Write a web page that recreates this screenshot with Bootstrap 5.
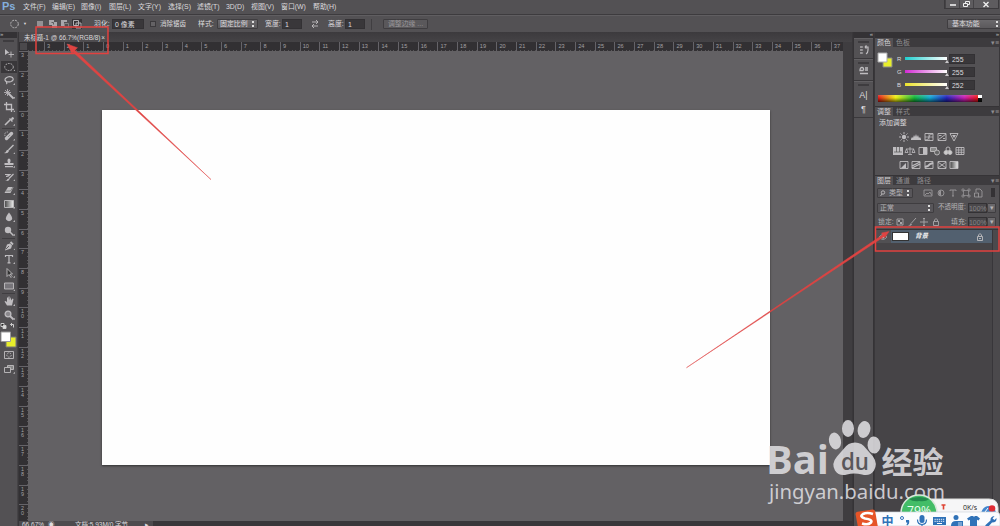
<!DOCTYPE html>
<html lang="zh-CN">
<head>
<meta charset="utf-8">
<title>Photoshop</title>
<link href="https://cdn.jsdelivr.net/npm/bootstrap@5.3.0/dist/css/bootstrap.min.css" rel="stylesheet">
<style>
body{width:1000px;height:526px;overflow:hidden;background:#535154;color:#dcdadd;font:6.9px/1 "Liberation Sans","Noto Sans CJK SC",sans-serif;white-space:nowrap}
svg{display:block;overflow:visible}
.ic{fill:none;stroke:#bfbdc0;stroke-width:.9;width:10px;height:10px}
.ic .f{fill:#bfbdc0;stroke:none}
.menubar{height:15px;border-bottom:1px solid #3d3b3e}
.logo{width:23px;font:bold 11px/13px "Liberation Sans",sans-serif;color:#84aedc;padding-left:2px}
.menus{display:grid;grid-template-columns:29px 29px 28px 29px 30px 29px 29px 25px 30px 32px 28px;line-height:13px}
.winbtns{margin-right:1px;height:9px;background:#5e5c5f;border:1px solid #3c3a3d;border-top:0}
.winbtns>div{display:flex;align-items:center;justify-content:center;border-left:1px solid #454346}
.opts{height:17px;display:grid;align-items:center;border-top:1px solid #605e61;grid-template-columns:10px 12px 13px 12.5px 12.5px 12px 12px 10px 18px 38px 10px 38px 19px 48px 17px 27px 19px 17px 26px 12px 45px 519px 55px}
.inp{background:#39373a;border:1px solid #333134;height:10px;line-height:9px;padding-left:2px}
.sel{background:linear-gradient(#6b696c,#5b595c);border:1px solid #3f3d40;height:10px;line-height:8px;padding:0 2px;display:flex;justify-content:space-between;border-radius:1px}
.ud{width:4px;height:7px;background:linear-gradient(#ddd,#ddd) center 1px/2px 2px no-repeat,linear-gradient(#ddd,#ddd) center 5px/2px 2px no-repeat}
.workspace{height:494px;background:#39373a}
.tools{width:18px;background:#535154;border-right:1px solid #454346}
.striphead{height:6px;background:#343235;font-size:6px;line-height:5px;color:#bbb}
.grip{height:2px;width:11px;background:#3e3c3f;margin:2px auto}
.tool{height:13.6px;display:flex;align-items:center;justify-content:center;position:relative}
.tool.more:after{content:"";width:2px;height:2px;position:absolute;right:2px;bottom:2px;background:#b5b3b6;clip-path:polygon(100% 0,100% 100%,0 100%)}
.tool.act>svg{background:#39373a;outline:1px solid #39373a;width:14px}
.sepr{height:1.2px;background:#403e41;margin:0 2px}
.doc{width:833px;margin-left:1px;background:#3f3d40}
.tabs{height:10px;background:linear-gradient(#3c3a3d,#454346)}
.dtab{width:90px;background:#4e4c4f;padding:0 3px 0 5px;line-height:11px;font-size:6.4px;border-right:1px solid #333}
.rulh{height:9.5px;background:#323033;overflow:hidden;width:824px}
.corner{width:9px;background:#4b494c;border:1px solid #323033}
.rt{margin-left:-3.7px}
.rt span{flex:0 0 19.68px;border-left:1px solid #656368;padding-left:2px;font-size:5.6px;line-height:8px;color:#a3a1a4;background:repeating-linear-gradient(90deg,transparent 0 2.9px,#59575a 2.9px 3.9px) bottom/100% 1.5px no-repeat}
.rulv{width:9px;background:#323033;overflow:hidden}
.rulv span{height:19.7px;flex:0 0 19.7px;border-top:1px solid #656368;padding:1px 0 0 2px;font-size:5.4px;line-height:5px;color:#a3a1a4;white-space:pre;background:repeating-linear-gradient(transparent 0 2.9px,#59575a 2.9px 3.9px) right/1.5px 100% no-repeat}
.stage{background:#636164;width:815px;padding:58.5px 0 0 74px}
.paper{width:668px;height:355px;background:#fefefe;box-shadow:0 1px 2px #333}
.status{height:5px;overflow:hidden;background:#39373a;font-size:6.5px;line-height:7px}
.status>div{width:134px;background:#4d4b4e}
.dock{width:21px;margin-left:1px;background:#535154;border:solid #353336;border-width:0 1px}
.dockgrp{border-bottom:1px solid #3a383b;border-top:1px solid #626063}
.panels{width:124px;margin-left:1px}
.ptabs{height:9px;background:#3d3b3e;line-height:9px;color:#8f8d90}
.ptabs b{font-weight:400;color:#d2d0d3;background:#535154;padding:0 2px;width:18px}
.ptabs span{width:21px;padding-left:3px}
.pbody{background:#535154;border-bottom:1px solid #363437}
.chan{height:13px;display:grid;grid-template-columns:8px 44px 26px;align-items:center}
.chan .inp{height:10px}
.bar{height:3px;position:relative;width:42px}
.bar:after{content:"";position:absolute;right:-2px;top:3px;border:solid transparent;border-width:0 2.5px 3.5px;border-bottom-color:#c8c6c9}
.spectrum{height:7px;width:104px;margin-left:3px;background:linear-gradient(#fff,#fff) right top/4px 3px no-repeat,linear-gradient(rgba(255,255,255,.2),transparent 40%,rgba(0,0,0,.6)),linear-gradient(90deg,#e01515,#eded10 17%,#12b438 35%,#11a6d0 50%,#2222b8 66%,#c71db0 83%,#e81515 96%,#111 96%)}
.adj{display:flex;justify-content:center;gap:2.6px;height:14px;align-items:center}
.dim{color:#858386}
.overlay{position:absolute;left:0;top:0;pointer-events:none}
</style>
</head>
<body>
<div class="menubar d-flex">
 <div class="logo">Ps</div>
 <div class="menus"><span>文件(F)</span><span>编辑(E)</span><span>图像(I)</span><span>图层(L)</span><span>文字(Y)</span><span>选择(S)</span><span>滤镜(T)</span><span>3D(D)</span><span>视图(V)</span><span>窗口(W)</span><span>帮助(H)</span></div>
 <div class="winbtns d-flex ms-auto">
  <div style="width:14px"><svg width="6" height="6"><path d="M0 4h6" stroke="#eee" stroke-width="1.6"/></svg></div>
  <div style="width:14px"><svg width="7" height="6" fill="none" stroke="#eee"><path d="M2.5 2V.5h4v3H5M.5 2.5h4v3h-4z"/></svg></div>
  <div style="width:25px"><svg width="6" height="5"><path d="M.5 0l5 5m0-5l-5 5" stroke="#eee" stroke-width="1.4"/></svg></div>
 </div>
</div>
<div class="opts">
 <span></span>
 <svg class="ic"><circle cx="4.5" cy="5" r="3.8" stroke-dasharray="2 1"/></svg>
 <span style="font-size:4px;padding-left:1px">▼</span>
 <svg class="ic"><path class="f" d="M2 2h6v6H2z" opacity=".6"/></svg>
 <svg class="ic"><path class="f" d="M1 1h5v2h3v6H4V6H1z" opacity=".8"/><path d="M3.5 3.5h2v2" stroke="#555"/></svg>
 <svg class="ic"><path class="f" d="M1 1h6v2H4v4H1z" opacity=".8"/><path d="M4.500 4.500h4v4h-4z" stroke="#888"/></svg>
 <svg class="ic" style="background:#363437"><path d="M1.500 1.500h5v5h-5zM4 4h5v5H4z"/></svg>
 <span></span>
 <span>羽化:</span><span class="inp" style="width:32px">0 像素</span>
 <span style="width:6px;height:6px;background:#646265;border:1px solid #3b393c"></span>
 <span style="font-size:6.500px">消除锯齿</span><span>样式:</span>
 <span class="sel" style="width:41px"><span>固定比例</span><span class="ud"></span></span>
 <span>宽度:</span><span class="inp" style="width:20px">1</span>
 <svg class="ic" style="margin-left:1px"><path d="M2 3h6m-2-2 2 2-2 2M8 7H2m2-2L2 7l2 2"/></svg>
 <span>高度:</span><span class="inp" style="width:20px">1</span><span style="width:1px;height:11px;background:#403e41"></span>
 <span class="sel justify-content-center" style="color:#9a989b;background:#5a585b">调整边缘 ...</span>
 <span></span><span class="sel" style="width:55px;padding-left:4px"><span>基本功能</span><span class="ud"></span></span>
</div>
<div class="workspace d-flex">
 <div class="tools">
  <div class="striphead">»</div><div class="grip"></div><div style="height:2.2px"></div>
  <div id="tools"></div>
  <svg width="18" height="9" fill="none" stroke="#ccc"><path d="M1 1.500h3v3H1z" fill="#222"/><path d="M3 3.500h3v3H3z" fill="#ddd"/><path d="M10.500 2.500h3v3M10.500 2.500l1.500-1.500m0 3l-1.500-1.500"/></svg>
  <svg width="18" height="18"><path d="M6 6h10v10H6z" fill="#e8ee2a" stroke="#777"/><path d="M1 1h9.500v9.500H1z" fill="#fff" stroke="#999"/></svg>
  <div class="tool"><svg class="ic"><path d="M.5 1.500h9v7h-9z"/><circle cx="5" cy="5" r="2.200" stroke-dasharray="1.500 1"/></svg></div>
  <div class="tool more"><svg class="ic"><path d="M3.500 1.500h6v4h-6z" fill="#888"/><path d="M.5 3.500h6v5h-6z" fill="#535154"/></svg></div>
 </div>
 <div class="doc d-flex flex-column">
  <div class="tabs d-flex"><div class="dtab d-flex justify-content-between"><span>未标题-1 @ 66.7%(RGB/8)</span><span>×</span></div></div>
  <div class="rulh d-flex"><div class="corner flex-shrink-0"></div><div class="overflow-hidden flex-grow-1"><div class="rt d-flex h-100" id="rh"></div></div></div>
  <div class="d-flex flex-grow-1" style="min-height:0">
   <div class="rulv d-flex flex-column" id="rv"></div>
   <div class="stage"><div class="paper"></div></div>
  </div>
  <div class="status"><div class="d-flex"><span style="width:25px;padding-left:3px">66.67%</span><span style="width:31px;padding-left:4px">◉</span><span style="width:70px">文档:5.93M/0 字节</span><span>▸</span></div></div>
 </div>
 <div class="dock">
  <div class="striphead text-end">«</div>
  <div class="dockgrp" style="height:21px"><div class="grip"></div><svg class="ic mx-auto"><path d="M2 1v2M2 4v2M2 7v2M3.500 1.500v1M3.500 4.500v1M3.500 7.500v1M6 2h3v3q0 3-2 4M6 2l1.500-1.500M6 2l1.500 1.500" stroke-width="1.200"/></svg></div>
  <div class="dockgrp" style="height:22px"><div class="grip"></div><svg class="ic mx-auto"><path d="M4.500 4.500H1q0-3 2-3t1.500 3M6 2h3M6 4h3M1 7.500h8" stroke-width="1.300"/></svg></div>
  <div class="dockgrp" style="height:37px"><div class="grip"></div><div class="text-center" style="font-size:9px;line-height:14px">A|<br>¶</div></div>
 </div>
 <div class="panels">
  <div class="striphead text-end">»</div>
  <div class="ptabs d-flex"><b>颜色</b><span>色板</span><span class="ms-auto text-end w-auto">▾≡</span></div>
  <div class="pbody" style="height:60px;padding-top:5px">
   <div class="d-flex" style="height:43px">
    <svg width="22" height="20"><path d="M8 6h9v9H8z" fill="#e8ee2a" stroke="#888"/><path d="M3 1h9v9H3z" fill="#fff" stroke="#aaa"/></svg>
    <div>
     <div class="chan"><span style="font-size:6px">R</span><div class="bar" style="background:linear-gradient(90deg,#20cfcf,#fff)"></div><span class="inp">255</span></div>
     <div class="chan"><span style="font-size:6px">G</span><div class="bar" style="background:linear-gradient(90deg,#d32bd3,#fff)"></div><span class="inp">255</span></div>
     <div class="chan"><span style="font-size:6px">B</span><div class="bar" style="background:linear-gradient(90deg,#ece22c,#fff)"></div><span class="inp">252</span></div>
    </div>
   </div>
   <div class="spectrum"></div>
  </div>
  <div class="ptabs d-flex"><b>调整</b><span>样式</span><span class="ms-auto text-end w-auto">▾≡</span></div>
  <div class="pbody" style="height:60px;padding-top:4px">
   <div style="padding-left:4px;height:10px">添加调整</div>
   <div style="padding-right:16px">
   <div class="adj" id="a1"></div><div class="adj" id="a2"></div><div class="adj" id="a3"></div></div>
  </div>
  <div class="ptabs d-flex"><b>图层</b><span>通道</span><span>路径</span><span class="ms-auto text-end w-auto">▾≡</span></div>
  <div class="pbody" style="height:45px;color:#b5b3b6">
   <div class="d-flex align-items-center" style="height:15px;padding-left:2px"><span class="sel" style="width:36px;background:#58565a"><svg class="ic" style="width:6px;height:8px"><circle cx="3" cy="3.500" r="1.700"/><path d="M2 5L.5 7"/></svg><span>类型</span><span class="ud"></span></span>
    <div class="d-flex" style="margin-left:10px;gap:2.500px;opacity:.65" id="filters"></div><span style="margin-left:8px;width:4px;height:9px;background:#343235"></span></div>
   <div class="d-flex align-items-center" style="height:15px;padding-left:2px"><span class="sel" style="width:57px;background:#58565a"><span>正常</span><span class="ud"></span></span><span style="margin-left:4px;width:30px;font-size:6.500px">不透明度:</span><span class="inp dim" style="width:19px;padding:0;background:#4a484b">100%</span><span class="sel" style="width:9px">▾</span></div>
   <div class="d-flex align-items-center" style="height:14px;padding-left:3px"><span style="width:17px">锁定:</span><div class="d-flex" style="gap:2px;opacity:.8" id="locks"></div><span style="margin-left:10px;width:17px">填充:</span><span class="inp dim" style="width:19px;padding:0;background:#4a484b">100%</span><span class="sel" style="width:9px">▾</span></div>
  </div>
  <div class="d-flex" style="height:297px;background:#464447;width:125px">
   <div style="width:117px"><div class="d-flex align-items-center" style="height:13px;background:#515053">
    <svg class="ic" style="width:16px"><path d="M4 5q4-5 8 0q-4 5-8 0z" stroke="#999"/><circle class="f" cx="8" cy="5" r="1.500"/></svg>
    <div class="d-flex align-items-center flex-grow-1 h-100" style="background:#52606f;color:#f2f2f2"><span style="width:17px;height:9px;background:#fff;border:1px solid #333;margin-left:1px"></span><b class="fst-italic" style="margin-left:6px;font-size:6.500px">背景</b><svg class="ic ms-auto" style="margin-right:7px"><path d="M2.500 4.500h5v4h-5zM3.500 4V3q1.500-3 3 0v1M4 6.500h2"/></svg></div></div></div>
   <div style="width:8px;background:#4b494c;border-left:1px solid #38363a"></div>
  </div>
 </div>
</div>

<svg class="overlay" width="1000" height="526">
 <g fill="none" stroke="#e2413f" stroke-width="1.500"><rect x="36" y="27" width="72" height="26.500"/><rect x="875.500" y="227" width="123.500" height="24"/></g>
 <g fill="#df4442" stroke="#df4442" stroke-width=".45"><path d="M211 179.600 71 50.300 73 48.400z"/><path d="M67 44l10.500 3.700-5.700 5.500z"/><path d="M686.500 367.700 883.800 234 885 236z"/><path d="M889 231.500l-4.200 6.200-3.300-4.700z"/></g>
 <g fill="#dedde0" fill-opacity=".88">
  <text x="766" y="474" font-family="Open Sans,sans-serif" font-weight="700" font-size="39" textLength="63" lengthAdjust="spacingAndGlyphs">Bai</text>
  <ellipse cx="835" cy="441" rx="6" ry="8.500" transform="rotate(-12 835 441)"/><ellipse cx="848" cy="428.500" rx="6" ry="8.500"/><ellipse cx="864" cy="429.500" rx="6.300" ry="8.500" transform="rotate(14 864 429.500)"/><ellipse cx="874" cy="445" rx="6.500" ry="8.500" transform="rotate(-5 874 445)"/>
  <path d="M855 442.500q7 0 11 6l7 8q5 7 1 14-4 6-12 4-8-2-15 0-8 2-12-4-4-7 2-14l7-8q4-6 11-6z"/>
  <text x="881.500" y="473" font-family="Noto Sans CJK SC,sans-serif" font-weight="700" font-size="30" textLength="62" lengthAdjust="spacingAndGlyphs">经验</text>
  <text x="769" y="499" font-family="Noto Sans,sans-serif" font-size="19.500" textLength="176" lengthAdjust="spacingAndGlyphs">jingyan.baidu.com</text>
 </g>
 <text x="841" y="470" font-family="Open Sans,sans-serif" font-weight="600" font-size="24" fill="#59575a" textLength="28" lengthAdjust="spacingAndGlyphs">du</text>
 <path d="M925 499h64q9 0 9 9v10h-73z" fill="#f6f6f7" stroke="#ddd"/>
 <circle cx="919" cy="513" r="18" fill="#43bd67" stroke="#d9e8dc" stroke-width="1.500"/>
 <path d="M909 499q10-4 20 0-3 3-10 2-6 1-10-2z" fill="#248a4d"/>
 <text x="907" y="514.500" font-family="Open Sans,sans-serif" font-size="12" fill="#e9fff0" textLength="24" lengthAdjust="spacingAndGlyphs">79%</text>
 <path d="M943.500 509.500v-4m-2-.5h4" stroke="#df4434" stroke-width="1.600"/>
 <text x="963" y="509.500" font-family="Open Sans,sans-serif" font-size="7" fill="#222" textLength="14">0K/s</text>
 <path d="M981 513q2-7 8-7t7 7z" fill="#4387cf"/><path d="M985 512l3-4" stroke="#fff"/><circle cx="992" cy="508.500" r="3.300" fill="#e02b34"/>
 <path d="M870 512h126q4 0 4 4v10H870z" fill="#fbfcfe" stroke="#d0d5dc" stroke-width=".7"/>
 <path d="M855.500 514q0-2 2-2.300l15-2.200q2.300-.2 2.700 2l2.800 16h-20z" fill="#e65427"/>
 <path d="M873 514q-6-2-10 0-4 2.500 2 4.500 8 1 6 4-3 3-9 1" fill="none" stroke="#fff" stroke-width="2.600"/>
 <g fill="#2f72b8"><text x="881.500" y="525.500" font-family="Noto Sans CJK SC,sans-serif" font-weight="700" font-size="12">中</text>
 <circle cx="902" cy="518" r="1.500" fill="none" stroke="#2f72b8"/><path d="M906 520h3q1 4-2 5.500l-.5-1q1-1 .8-2H906z"/>
 <rect x="919.500" y="515" width="5" height="8" rx="2.500"/><path d="M917.500 519.500q0 5 4.500 5t4.500-5M922 524v2" fill="none" stroke="#2f72b8" stroke-width="1.200"/>
 <path d="M933 517h13v8h-13z"/><path d="M934.500 519.300h10M934.500 521.300h10" stroke="#fff" stroke-width=".9" stroke-dasharray="1.300 .8"/><path d="M937 523.500h5" stroke="#fff"/>
 <circle cx="956" cy="517.500" r="2.500"/><path d="M951 526q0-5 5-5h7v5z"/><path d="M959 522v4m2-4v4" stroke="#fff" stroke-width=".7"/>
 <path d="M971 516h2q1 1.500 2 0h2l3 2.500-1.500 2-1.500-.7V526h-7v-6.200l-1.500.7-1.500-2z"/>
 <path d="M985 525.500l5.500-5q-.5-4 4-4.500l-2 2.500 2 1.500 2-2q.5 4.500-4.500 4.500l-4 4.500z"/></g>
</svg>
<script>
const svg=(p,c='')=>`<svg class="ic" ${c} viewBox="0 0 10 10">${p}</svg>`;
// toolbar glyphs, top to bottom; '-' is a divider
const tools=[
'<path class="f" d="M1 1l4.500 4-2 .2L1 7z"/><path d="M7 3.500v6M4.500 6.500H10"/>',
'<ellipse cx="5" cy="5" rx="4.300" ry="3.500" stroke-dasharray="1.800 1"/>',
'<path d="M3 7Q-.5 5 2 3q3-2.500 6.500-.5 2 2.500-1.500 4-2 .8-4 .2-1 1 0 2.500" stroke-width="1.200"/>',
'<path d="M4.500 4.500l5 5" stroke-width="1.800"/><path d="M3.500 0v7M0 3.500h7M1 1l5 5M6 1L1 6" stroke-width=".8"/>',
'<path d="M2.500 0v7.500H10M0 2.500h7.500V10" stroke-width="1.300"/>',
'<path d="M1 9l5-5" stroke-width="1.600"/><path class="f" d="M5 3l1-1 1 1q1-3 2.500-1.500T8 4l1 1-1 1z"/>',
'-',
'<path d="M2.500 7.500l5-5" stroke-width="3.400" stroke-linecap="round"/><path d="M1 5q-1-4 3-4" stroke-dasharray="1 .7"/><path d="M4.500 5.500l1-1" stroke="#555"/>',
'<path d="M9.500 1L4.500 6" stroke-width="1.400"/><path class="f" d="M0 9q2-.5 2.500-2.500 2-1.500 2.500.5-1 3-5 2z"/>',
'<path class="f" d="M4 5Q2.500 1 5 .5 7.500 1 6 5h3.500v2h-9V5zM1 8h8v1.300H1z"/>',
'<path d="M9.500 2L5 6.500M1 2.500h5q-2 2-4 2" stroke-width="1.200"/><path class="f" d="M1 9q2 0 2.500-2 2-1 2 .5-1 2-4.500 1.500z"/>',
'<path class="f" d="M4 2h5.500L6.500 8H.5z"/><path d="M1.500 6h5L9 2" stroke="#777"/>',
'<path d="M.5 1.500h9v7h-9z" fill="url(#gr)"/>',
'<path class="f" d="M5 .5q4 5 3 7-3 3.500-6 0-1-2 3-7z"/>',
'<circle class="f" cx="4" cy="4" r="3.200"/><path d="M6 6l3.500 3.500" stroke-width="1.500"/>',
'-',
'<path class="f" d="M1 9.500l2-6 3-1 2 2-1 3z"/><path d="M6.500 1l2.500 2.500" stroke-width="1.800"/><path d="M2 8l3-3" stroke="#555"/>',
'<path d="M1.500 3V1.500h7V3M5 1.500v7M3.500 8.800h3" stroke-width="1.200"/>',
'<path d="M3 .5v8l2-2 2 3 1-1-2-2.500h2.500z" fill="#333"/>',
'<path d="M.5 2h9v6h-9z" fill="#77757a"/>',
'-',
'<path class="f" d="M3 9.500L.5 5.500l1-.6L3 6V1.500h1V4l.5-3.500h1V4L7 1v3.500l1.500-2L9.500 3 8 9.500z"/>',
'<circle cx="4" cy="4" r="2.900" fill="#8a888c" stroke-width="1.300"/><path d="M6 6l3.500 3.500" stroke-width="1.800"/>'];
document.getElementById('tools').innerHTML='<svg width="0" height="0"><linearGradient id="gr"><stop stop-color="#444"/><stop offset="1" stop-color="#eee"/></linearGradient></svg>'+tools.map((t,i)=>t=='-'?'<div class="sepr"></div>':`<div class="tool ${i?'more':''} ${i==1?'act':''}">${svg(t)}</div>`).join('');
let h='';for(let i=-4;i<38;i++)h+=`<span>${i==-4?'':Math.abs(i)}</span>`;
document.getElementById('rh').innerHTML=h;
let v='';for(let i=-3;i<21;i++)v+=`<span>${String(Math.abs(i)).split('').join('\n')}</span>`;
document.getElementById('rv').innerHTML=v;
const fr='<path d="M1 1.500h8v7H1z"/>';
const put=(id,a)=>document.getElementById(id).innerHTML=a.map(x=>svg(x)).join('');
put('a1',['<circle class="f" cx="5" cy="5" r="2.200"/><path d="M5 0v2M5 8v2M0 5h2M8 5h2M1.500 1.500l1.200 1.200M7.300 7.300l1.200 1.200M8.500 1.500L7.300 2.700M2.700 7.300L1.500 8.500"/>','<path class="f" d="M0 7l1-2 1 1 1-3 1 2 1-3 1 3 1-2 1 3 1-1 1 2v1H0z"/>',fr+'<path d="M1 8q4 0 4-3t4-3M1 5h8M5 1v7" stroke-width=".7"/>',fr+'<path d="M1 8l8-6M2 3.500h2.500M6 6.500h2"/>','<path d="M1 1.500h8L5 9z"/><path class="f" d="M3 3h4L5 6z"/>']);
put('a2',['<path class="f" d="M0 1h10v8H0z"/><path d="M1 6h8M3.500 1v5M6.500 1v5" stroke="#555" stroke-width=".7"/>','<path d="M5 1v7M1 3h8M1.500 3L0 6.500h3zM8.500 3L7 6.500h3zM3 8.500h4" stroke-width=".8"/>',fr+'<path class="f" d="M5 1h4v7H5z"/>','<path d="M.5 1.500h6v4h-6z" fill="#888"/><circle cx="7" cy="6.500" r="2.500" fill="#666"/>','<circle cx="5" cy="3" r="2"/><circle cx="3" cy="6.500" r="2" fill="#ccc"/><circle cx="7" cy="6.500" r="2" fill="#ccc"/>',fr+'<path d="M1 4h8M1 6.300h8M3.700 1v8M6.300 1v8" stroke-width=".8"/>']);
put('a3',[fr+'<path class="f" d="M2 8l5-5v5z"/>',fr+'<path d="M1 6l8-4M1 8l8-4" stroke-width="1.300"/>',fr+'<path d="M1 7l3-1 2-2 3-1" stroke-width="2"/>',fr+'<path d="M1 2l4 3 4-3M1 8l4-3 4 3"/>','<path d="M1 1.500h8v7H1z" fill="url(#gr)"/>']);
put('filters',['<path d="M1 2h8v6H1zM2 7l2-2 1 1 2-2 1.500 3"/>','<circle cx="5" cy="5" r="3"/><path class="f" d="M5 2v6q-5-3 0-6z"/>','<path d="M2 3V2h6v1M5 2v6M4 8h2"/>','<path d="M2.500 2.500h5v5h-5zM1 1h2v2H1zM7 1h2v2H7zM1 7h2v2H1zM7 7h2v2H7z" stroke-width=".7"/>','<path d="M3 4V1h4l2 2v6H5M1.500 5h4v4h-4z"/>']);
put('locks',['<path d="M2 2h6v6H2z"/><path class="f" d="M3 3h2v2H3zM5 5h2v2H5z"/>','<path d="M9 1L4.500 6"/><path class="f" d="M1 8q3 0 2.500-2l1.500 1q-1 3-4 1z"/>','<path d="M5 1v8M1 5h8M4 2l1-1 1 1M4 8l1 1 1-1"/>','<path d="M2.500 4.500h5v4h-5zM3.500 4V3q1.500-3 3 0v1"/>']);
</script>
<script src="https://cdn.jsdelivr.net/npm/bootstrap@5.3.0/dist/js/bootstrap.bundle.min.js"></script>
</body>
</html>
